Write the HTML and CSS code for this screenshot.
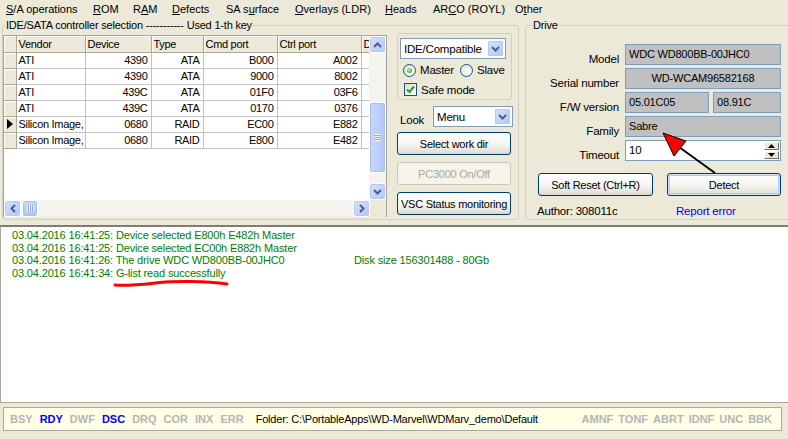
FILE: index.html
```html
<!DOCTYPE html>
<html>
<head>
<meta charset="utf-8">
<title>WD Marvel</title>
<link rel="stylesheet" href="styles.css">
</head>
<body>
<div class="app">
  <nav class="menubar">
    <span class="mi"><u>S</u>/A operations</span>
    <span class="mi"><u>R</u>OM</span>
    <span class="mi">R<u>A</u>M</span>
    <span class="mi"><u>D</u>efects</span>
    <span class="mi">SA s<u>u</u>rface</span>
    <span class="mi"><u>O</u>verlays (LDR)</span>
    <span class="mi"><u>H</u>eads</span>
    <span class="mi">AR<u>C</u>O (ROYL)</span>
    <span class="mi">O<u>t</u>her</span>
  </nav>

  <div class="top">
    <fieldset class="grp ctl">
      <legend>IDE/SATA controller selection ----------- Used 1-th key</legend>
      <div class="ctl-body">
        <div class="grid">
          <div class="grid-main">
            <div class="cells">
              <table class="tbl">
                <colgroup><col class="c0"><col class="c1"><col class="c2"><col class="c3"><col class="c4"><col class="c5"><col class="c6"></colgroup>
                <thead>
                  <tr><th class="ind"></th><th>Vendor</th><th>Device</th><th>Type</th><th>Cmd port</th><th>Ctrl port</th><th>D</th></tr>
                </thead>
                <tbody>
                  <tr><td class="ind"></td><td>ATI</td><td class="r">4390</td><td class="r">ATA</td><td class="r">B000</td><td class="r">A002</td><td></td></tr>
                  <tr><td class="ind"></td><td>ATI</td><td class="r">4390</td><td class="r">ATA</td><td class="r">9000</td><td class="r">8002</td><td></td></tr>
                  <tr><td class="ind"></td><td>ATI</td><td class="r">439C</td><td class="r">ATA</td><td class="r">01F0</td><td class="r">03F6</td><td></td></tr>
                  <tr><td class="ind"></td><td>ATI</td><td class="r">439C</td><td class="r">ATA</td><td class="r">0170</td><td class="r">0376</td><td></td></tr>
                  <tr><td class="ind cur"><span class="tri"></span></td><td>Silicon Image,</td><td class="r">0680</td><td class="r">RAID</td><td class="r">EC00</td><td class="r">E882</td><td></td></tr>
                  <tr><td class="ind"></td><td>Silicon Image,</td><td class="r">0680</td><td class="r">RAID</td><td class="r">E800</td><td class="r">E482</td><td></td></tr>
                </tbody>
              </table>
            </div>
            <div class="vscroll">
              <div class="sbtn"><svg width="9" height="6" viewBox="0 0 9 6"><path d="M1 5 L4.5 1.5 L8 5" fill="none" stroke="#4D6185" stroke-width="2"/></svg></div>
              <div class="vtrack"><div class="vthumb"><span class="grip-h"></span></div></div>
              <div class="sbtn"><svg width="9" height="6" viewBox="0 0 9 6"><path d="M1 1 L4.5 4.5 L8 1" fill="none" stroke="#4D6185" stroke-width="2"/></svg></div>
            </div>
          </div>
          <div class="hrow">
            <div class="hscroll">
              <div class="sbtn"><svg width="6" height="9" viewBox="0 0 6 9"><path d="M5 1 L1.5 4.5 L5 8" fill="none" stroke="#4D6185" stroke-width="2"/></svg></div>
              <div class="htrack"><div class="hthumb"><span class="grip-v"></span></div></div>
              <div class="sbtn"><svg width="6" height="9" viewBox="0 0 6 9"><path d="M1 1 L4.5 4.5 L1 8" fill="none" stroke="#4D6185" stroke-width="2"/></svg></div>
            </div>
            <div class="corner"></div>
          </div>
        </div>

        <div class="side">
          <fieldset class="mode">
            <div class="combo wide"><span class="ctext">IDE/Compatible</span><span class="dd"><svg width="9" height="6" viewBox="0 0 9 6"><path d="M1 1 L4.5 4.5 L8 1" fill="none" stroke="#4D6185" stroke-width="2"/></svg></span></div>
            <div class="radios">
              <label class="opt"><span class="radio on"></span>Master</label>
              <label class="opt"><span class="radio"></span>Slave</label>
            </div>
            <label class="opt chk-row"><span class="chk"><svg width="9" height="9" viewBox="0 0 9 9"><path d="M1 4.5 L3.5 7 L8 1.5" fill="none" stroke="#21A121" stroke-width="2"/></svg></span>Safe mode</label>
          </fieldset>
          <div class="look">
            <span>Look</span>
            <div class="combo small"><span class="ctext">Menu</span><span class="dd"><svg width="9" height="6" viewBox="0 0 9 6"><path d="M1 1 L4.5 4.5 L8 1" fill="none" stroke="#4D6185" stroke-width="2"/></svg></span></div>
          </div>
          <button class="btn">Select work dir</button>
          <button class="btn" disabled>PC3000 On/Off</button>
          <button class="btn">VSC Status monitoring</button>
        </div>
      </div>
    </fieldset>

    <fieldset class="grp drive">
      <legend>Drive</legend>
      <div class="form">
        <span class="lbl">Model</span><div class="fld">WDC WD800BB-00JHC0</div>
        <span class="lbl">Serial number</span><div class="fld ctr">WD-WCAM96582168</div>
        <span class="lbl">F/W version</span>
        <div class="fw"><div class="fld">05.01C05</div><div class="fld">08.91C</div></div>
        <span class="lbl">Family</span><div class="fld">Sabre</div>
        <span class="lbl">Timeout</span>
        <div class="spin"><span class="sval">10</span>
          <div class="spinbtns">
            <span class="sb"><svg width="7" height="4" viewBox="0 0 7 4"><path d="M0 4 L3.5 0 L7 4Z" fill="#000"/></svg></span>
            <span class="sb"><svg width="7" height="4" viewBox="0 0 7 4"><path d="M0 0 L3.5 4 L7 0Z" fill="#000"/></svg></span>
          </div>
        </div>
      </div>
      <div class="btnrow">
        <button class="btn">Soft Reset (Ctrl+R)</button>
        <button class="btn def">Detect</button>
      </div>
      <div class="author">
        <span>Author: 308011c</span>
        <span class="link">Report error</span>
      </div>
    </fieldset>
  </div>

  <div class="log">
    <div class="ln">03.04.2016 16:41:25: Device selected E800h E482h Master</div>
    <div class="ln">03.04.2016 16:41:25: Device selected EC00h E882h Master</div>
    <div class="ln"><span class="tab">03.04.2016 16:41:26: The drive WDC WD800BB-00JHC0</span>Disk size 156301488 - 80Gb</div>
    <div class="ln">03.04.2016 16:41:34: G-list read successfully</div>
  </div>

  <div class="status">
    <div class="panel">
      <span class="st off">BSY</span>
      <span class="st on">RDY</span>
      <span class="st off">DWF</span>
      <span class="st on">DSC</span>
      <span class="st off">DRQ</span>
      <span class="st off">COR</span>
      <span class="st off">INX</span>
      <span class="st off">ERR</span>
      <span class="folder">Folder: C:\PortableApps\WD-Marvel\WDMarv_demo\Default</span>
      <span class="errs">
        <span class="st off">AMNF</span><span class="st off">TONF</span><span class="st off">ABRT</span><span class="st off">IDNF</span><span class="st off">UNC</span><span class="st off">BBK</span>
      </span>
    </div>
  </div>
</div>

<svg class="annot" width="788" height="439" viewBox="0 0 788 439">
  <line x1="715" y1="173" x2="679" y2="147" stroke="#000" stroke-width="2"/>
  <polygon points="663,133 686,141 674,156" fill="#FF0000" stroke="#000" stroke-width="1"/>
  <path d="M115,285 C130,286 145,284 160,282.5 S205,281 227,284" stroke="#FF0000" stroke-width="3" fill="none" stroke-linecap="round"/>
</svg>
</body>
</html>
```

FILE: styles.css
```css
* { box-sizing: border-box; }
html, body { margin: 0; padding: 0; }
body {
  width: 788px;
  height: 439px;
  overflow: hidden;
  background: #ECE9D8;
  font-family: "Liberation Sans", Arial, sans-serif;
  font-size: 11px;
  letter-spacing: -0.2px;
  color: #000;
  position: relative;
}
.app { display: flex; flex-direction: column; height: 439px; }

/* menu */
.menubar {
  height: 19px;
  display: grid;
  grid-template-columns: 87px 40px 39px 54px 69px 90px 48px 82px auto;
  padding-left: 6px;
  line-height: 19px;
  letter-spacing: 0;
}
.mi { white-space: nowrap; }
.mi u { text-decoration: underline; text-underline-offset: 1px; }

/* top area */
.top { display: flex; height: 206px; align-items: flex-start; }
.grp {
  margin: 0;
  border: 1px solid #D0D0BF;
  border-radius: 3px;
  min-width: 0;
  flex-shrink: 0;
}
.grp > legend { padding: 0 1px; line-height: 13px; margin-left: 2px; }

.ctl { margin-left: 2px; width: 517px; height: 201px; padding: 3px 5px 0 0; }
.ctl-body { display: flex; gap: 10px; }

/* grid */
.grid { width: 384px; height: 182px; border: 1px solid #A5A5A0; background: #fff; display: flex; flex-direction: column; }
.grid-main { display: flex; height: 165px; }
.cells { width: 366px; overflow: hidden; background: #fff; }
.tbl { border-collapse: collapse; table-layout: fixed; width: 397px; }
.c0 { width: 12px; } .c1 { width: 69px; } .c2 { width: 66px; } .c3 { width: 52px; }
.c4 { width: 74px; } .c5 { width: 84px; } .c6 { width: 40px; }
.tbl tr { height: 16px; }
.tbl th, .tbl td {
  padding: 0 3px 0 2px;
  border-right: 1px solid #C0C0C0;
  border-bottom: 1px solid #C0C0C0;
  white-space: nowrap;
  overflow: hidden;
  line-height: 14px;
  font-weight: normal;
  text-align: left;
  letter-spacing: -0.3px;
}
.tbl th { background: #ECE9D8; border-right-color: #ACA899; border-bottom-color: #ACA899; box-shadow: inset 1px 1px 0 #fff; }
.tbl td.r { text-align: right; }
.tbl .ind { background: #ECE9D8; border-right-color: #ACA899; border-bottom-color: #ACA899; box-shadow: inset 1px 1px 0 #fff; padding: 0; }
.tri { display: block; width: 0; height: 0; margin-left: 3px; border-left: 6px solid #000; border-top: 5px solid transparent; border-bottom: 5px solid transparent; }

.sbtn {
  width: 17px; height: 17px;
  display: flex; align-items: center; justify-content: center;
  border: 1px solid #fff;
  border-radius: 3px;
  background: linear-gradient(135deg, #D9E4FD 0%, #C3D3FB 50%, #B3C8F6 100%);
  box-shadow: inset 0 0 0 1px #B5C9F3;
}
.vscroll { width: 17px; background: #F4F3EE; display: flex; flex-direction: column; }
.vtrack { flex: 1; padding: 49px 0 10px; }
.vthumb {
  height: 71px; border-radius: 3px; border: 1px solid #fff;
  background: linear-gradient(90deg, #C8D7FB, #BCD0FA 50%, #AFC5F5);
  box-shadow: inset 0 0 0 1px #A9BFF0;
  display: flex; align-items: center; justify-content: center;
}
.grip-h { width: 7px; height: 7px; background: repeating-linear-gradient(180deg, #EEF3FE 0 1px, #8DA6E0 1px 2px); }
.hrow { display: flex; height: 17px; }
.hscroll { width: 366px; background: #F4F3EE; display: flex; }
.htrack { flex: 1; padding-left: 1px; }
.hthumb {
  width: 16px; height: 17px; border-radius: 3px; border: 1px solid #fff;
  background: linear-gradient(180deg, #C8D7FB, #BCD0FA 50%, #AFC5F5);
  box-shadow: inset 0 0 0 1px #A9BFF0;
  display: flex; align-items: center; justify-content: center;
}
.grip-v { width: 7px; height: 7px; background: repeating-linear-gradient(90deg, #EEF3FE 0 1px, #8DA6E0 1px 2px); }
.corner { flex: 1; background: #ECE9D8; }

/* side controls */
.side { width: 115px; margin-top: -2px; display: flex; flex-direction: column; }
.mode { margin: 0; height: 67px; padding: 4px 2px 0 2px; border: 1px solid #D0D0BF; border-radius: 3px; }
.combo {
  height: 21px; display: flex; align-items: center;
  border: 1px solid #7F9DB9; background: #fff;
}
.combo.wide { width: 106px; }
.combo.small { width: 80px; }
.ctext { flex: 1; padding-left: 3px; font-size: 11.5px; }
.dd {
  width: 17px; height: 17px; margin-right: 1px;
  display: flex; align-items: center; justify-content: center;
  border: 1px solid #fff; border-radius: 2px;
  background: linear-gradient(135deg, #D9E4FD 0%, #C3D3FB 50%, #B3C8F6 100%);
  box-shadow: inset 0 0 0 1px #B5C9F3;
}
.radios { display: flex; gap: 6px; margin-top: 3px; height: 16px; align-items: center; padding-left: 3px; }
.opt { display: flex; align-items: center; gap: 4px; font-size: 11.5px; }
.radio {
  width: 13px; height: 13px; border-radius: 50%;
  border: 1px solid #1C5180;
  background: radial-gradient(circle at 60% 60%, #fff, #DCDCD7);
  position: relative;
}
.radio.on::after {
  content: ""; position: absolute; left: 3px; top: 3px; width: 5px; height: 5px; border-radius: 50%;
  background: radial-gradient(circle at 40% 40%, #A8F0A8, #21A121);
}
.chk-row { margin-top: 4px; padding-left: 4px; height: 15px; }
.chk {
  width: 13px; height: 13px; border: 1px solid #1C5180;
  background: linear-gradient(135deg, #DCDCD7, #fff);
  display: flex; align-items: center; justify-content: center;
}
.look { display: flex; align-items: center; justify-content: space-between; margin-top: 6px; height: 21px; padding-left: 3px; }
.look > span { font-size: 11.5px; margin-top: 6px; }
.look .combo { margin-right: -1px; }

.btn {
  font-family: inherit; font-size: 11px; letter-spacing: -0.25px; color: #000;
  height: 23px; padding: 0;
  border: 1px solid #003C74; border-radius: 3px;
  background: linear-gradient(180deg, #FFFFFF 0%, #F3F3EF 60%, #E3E1D6 90%, #D6D0C5 100%);
  white-space: nowrap;
}
.side .btn { width: 114px; margin-top: 7px; }
.side .btn:first-of-type { margin-top: 5px; }
.btn:disabled { color: #ACA899; border-color: #C9C7BA; background: #F5F4EA; }

/* drive */
.drive { margin-left: 6px; width: 270px; height: 201px; padding: 12px 0 0 0; }
.drive > legend { margin-left: 6px; }
.form {
  display: grid;
  grid-template-columns: 93px 156px;
  column-gap: 6px;
  row-gap: 3px;
}
.lbl { text-align: right; align-self: end; line-height: 13px; font-size: 11.5px; margin-bottom: -1px; }
.fld {
  height: 21px; background: #C0C0C0; border: 1px solid #7F9DB9;
  padding: 2px 0 0 3px; line-height: 14px; font-size: 11px; white-space: nowrap; overflow: hidden;
}
.fld.ctr { text-align: center; padding-left: 0; }
.fw { display: flex; gap: 4px; }
.fw .fld:first-child { width: 84px; }
.fw .fld:last-child { flex: 1; }
.spin { height: 21px; border: 1px solid #7F9DB9; background: #fff; display: flex; }
.sval { flex: 1; padding: 2px 0 0 3px; line-height: 14px; font-size: 11.5px; }
.spinbtns { width: 16px; display: flex; flex-direction: column; padding: 1px 1px 1px 0; gap: 1px; }
.sb {
  flex: 1; display: flex; align-items: center; justify-content: center;
  background: #ECE9D8; border: 1px solid; border-color: #fff #716F64 #716F64 #fff;
}
.btnrow { display: flex; gap: 14px; margin: 12px 0 0 12px; }
.btnrow .btn:first-child { width: 115px; }
.btnrow .btn:last-child { width: 114px; }
.btn.def { box-shadow: inset 0 0 0 1px #CEE7FF, inset 0 0 0 2px #A6CAF0; }
.author { display: flex; margin: 9px 0 0 11px; line-height: 13px; font-size: 11.5px; }
.author span:first-child { width: 139px; }
.link { color: #0000FF; }

/* log */
.log {
  flex: 1;
  margin-top: 0;
  background: #fff;
  border-top: 2px solid #7E7D74;
  border-left: 1px solid #ACA899;
  border-bottom: 1px solid #ACA899;
  padding: 2px 0 0 11px;
  color: #008000;
  font-size: 11px;
}
.ln { line-height: 12.6px; white-space: nowrap; letter-spacing: -0.15px; }
.tab { display: inline-block; width: 342px; }

/* status */
.status { height: 36px; padding: 4px 6px 0 3px; }
.panel {
  height: 24px; border: 1px solid #A7A6AA; background: #FFFFE6;
  display: flex; align-items: center; padding-left: 6px; gap: 7px;
  white-space: nowrap;
}
.st { font-weight: bold; font-size: 11px; letter-spacing: 0; }
.st.off { color: #B5B5B5; }
.st.on { color: #0000FF; }
.folder { margin-left: 5px; }
.errs { margin-left: auto; margin-right: 9px; display: flex; gap: 5px; }

.annot { position: absolute; left: 0; top: 0; pointer-events: none; }
```
